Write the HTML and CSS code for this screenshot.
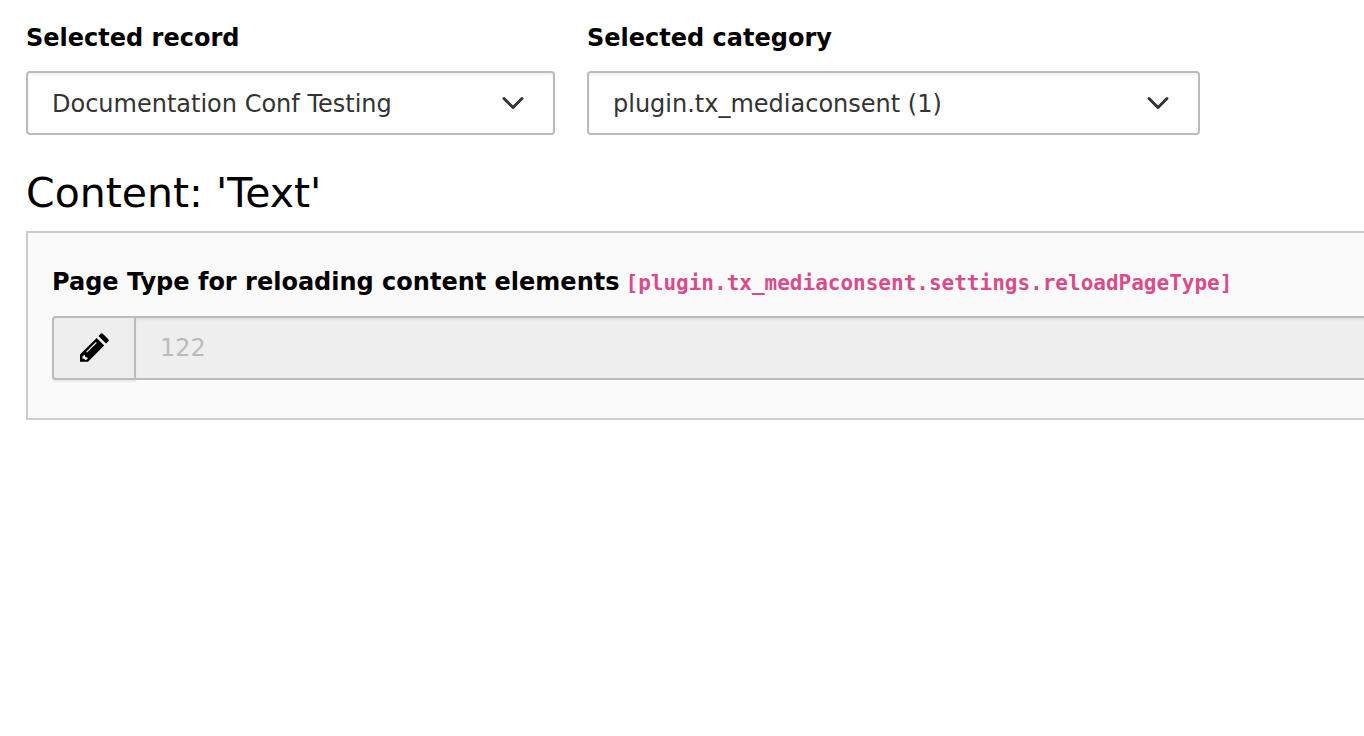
FILE: index.html
```html
<!DOCTYPE html>
<html lang="en">
<head>
<meta charset="utf-8">
<title>Content: 'Text'</title>
<link rel="stylesheet" href="styles.css">
</head>
<body>
<main class="module">
  <form class="filters">
    <div class="field field-record">
      <label class="field-label" for="record">Selected record</label>
      <div class="select-wrap">
        <select class="select" id="record"><option>Documentation Conf Testing</option></select>
        <svg class="chevron" viewBox="0 0 32 32" aria-hidden="true"><path d="M7 11.500l9 9 9-9"/></svg>
      </div>
    </div>
    <div class="field field-category">
      <label class="field-label" for="category">Selected category</label>
      <div class="select-wrap">
        <select class="select" id="category"><option>plugin.tx_mediaconsent (1)</option></select>
        <svg class="chevron" viewBox="0 0 32 32" aria-hidden="true"><path d="M7 11.500l9 9 9-9"/></svg>
      </div>
    </div>
  </form>
  <h1 class="title">Content: 'Text'</h1>
  <section class="panel">
    <div class="setting-head">
      <label class="setting-label" for="page-type">Page Type for reloading content elements</label>
      <code class="setting-key">[plugin.tx_mediaconsent.settings.reloadPageType]</code>
    </div>
    <div class="input-group">
      <button class="edit" type="button" aria-label="Edit">
        <svg class="pencil" viewBox="0 0 32 32" aria-hidden="true">
          <path d="M20.500 4l2.500-2.400q.8-.6 1.600 0l5.900 6q.7.800 0 1.600L28 11.600zM18.600 6l7.600 7.600L10 29.800H2V22.500z"/>
          <path class="pencil-light" d="M4.400 24.200L6.600 22.700 7.400 25 9.400 25.500 9.800 26.700 7.600 28.200 6 26.800H4.600z"/>
          <path class="pencil-line" d="M8.600 20.200L18.300 10.500"/>
        </svg>
      </button>
      <input class="input" id="page-type" type="text" placeholder="122" disabled>
    </div>
  </section>
</main>
</body>
</html>
```
FILE: styles.css
```css
* { box-sizing: border-box; }

body {
  margin: 0;
  background: #fff;
  color: #000;
  font-family: Verdana, "DejaVu Sans", sans-serif;
  font-size: 24px;
  line-height: 36px;
}

.module { padding: 20px 0 0 26px; overflow: hidden; }

.filters { display: flex; gap: 32px; margin-right: 164px; }
.field { display: flex; flex-direction: column; gap: 15px; min-width: 0; }
.field-record { flex: 529; }
.field-category { flex: 613; }
.field-label, .setting-label { font-weight: bold; }

.select-wrap { display: grid; align-items: center; }
.select {
  grid-area: 1 / 1;
  width: 100%;
  height: 64px;
  padding: 1px 72px 0 24px;
  border: 2px solid #bbb;
  border-radius: 4px;
  background: #fefefe;
  box-shadow: inset 0 2px 2px rgba(0, 0, 0, .05);
  color: #333;
  font: inherit;
  appearance: none;
}
.chevron {
  grid-area: 1 / 1;
  justify-self: end;
  width: 32px;
  height: 32px;
  margin-right: 26px;
  pointer-events: none;
  fill: none;
  stroke: #333;
  stroke-width: 3;
  stroke-linecap: round;
  stroke-linejoin: round;
}

.title { margin: 34px 0 14px; font-size: 41px; line-height: 48px; font-weight: normal; }

.panel {
  margin-right: -26px;
  padding: 31px 24px 38px;
  border: 2px solid #ccc;
  background: #fafafa;
}
.setting-head { display: flex; align-items: baseline; gap: 6px; margin-bottom: 15px; }
.setting-key {
  color: #d84c8b;
  font-family: "DejaVu Sans Mono", monospace;
  font-size: 21px;
  font-weight: bold;
}

.input-group { display: flex; height: 64px; margin-right: -24px; }
.edit {
  display: grid;
  place-items: center;
  width: 84px;
  padding: 0;
  border: 2px solid #bbb;
  border-radius: 4px 0 0 4px;
  background: #eee;
  box-shadow: 0 2px 2px rgba(0, 0, 0, .07);
}
.pencil { width: 32px; height: 32px; }
.pencil-light { fill: #eee; }
.pencil-line { fill: none; stroke: #eee; stroke-width: 1.2; }
.input {
  flex: 1;
  min-width: 0;
  padding: 0 24px;
  border: 2px solid #bbb;
  border-left: 0;
  border-radius: 0;
  background: #eee;
  box-shadow: inset 0 2px 2px rgba(0, 0, 0, .05);
  font: inherit;
}
.input::placeholder { color: #bbb; opacity: 1; }
```
